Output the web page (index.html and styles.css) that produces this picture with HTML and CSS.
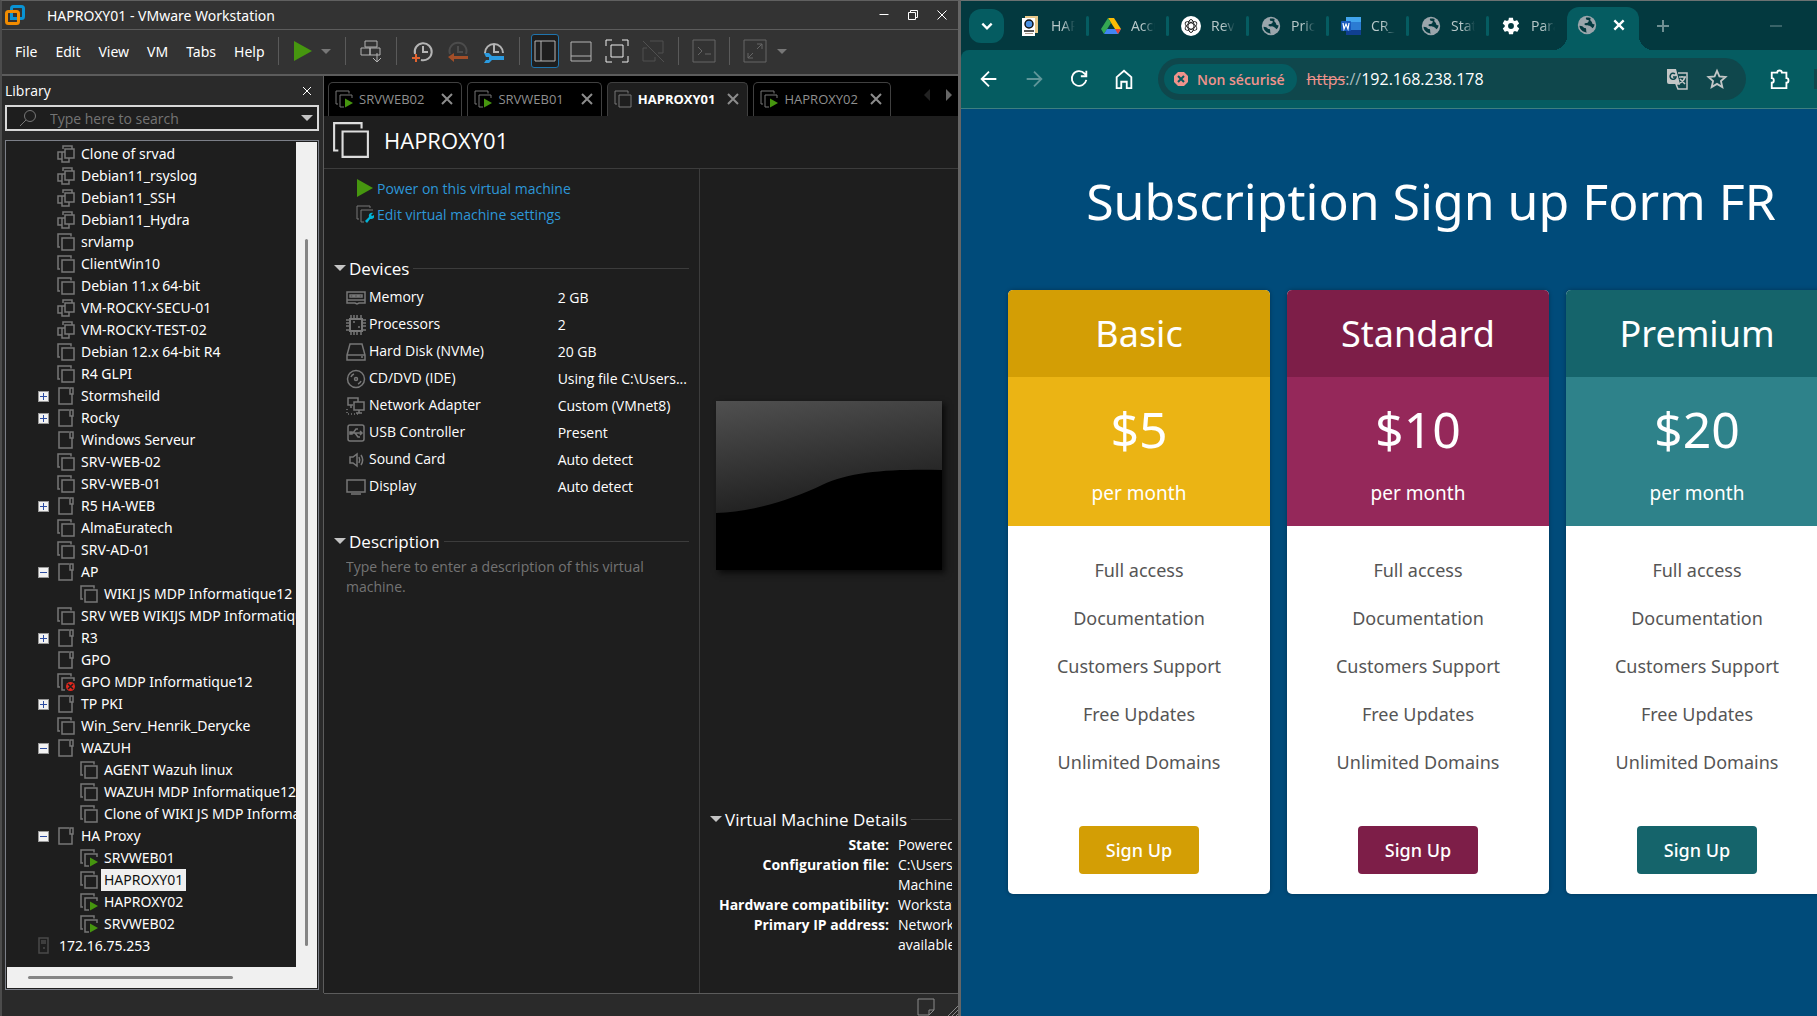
FILE: index.html
```html
<!DOCTYPE html>
<html lang="en">
<head>
    <meta charset="UTF-8">
    <meta name="viewport" content="width=device-width, initial-scale=1.0">
    <title>HAPROXY01 - VMware Workstation</title>
    <link rel="stylesheet" href="styles.css">
</head>
<body>
    <!-- Shared icons -->
    <svg class="sprite" aria-hidden="true">
        <symbol id="vm" viewBox="0 0 18 18"><path d="M3 14H1V1h13v2.500M5 5h12v12H5z"/></symbol>
        <symbol id="vm-on" viewBox="0 0 18 18"><path d="M3 14H1V1h13v2.500M9 17H5V5h12v3"/><path class="green" d="M10 8.500l8 4.500-8 4.500z"/></symbol>
        <symbol id="vm-error" viewBox="0 0 18 18"><path d="M3 14H1V1h13v2.500M8 17H5V5h12v3"/><circle class="red" cx="13.500" cy="13.500" r="4.500"/><path class="cross" d="M11 11l5 5M16 11l-5 5"/></symbol>
        <symbol id="clone" viewBox="0 0 18 18"><path d="M6 4V1h9v3M8 4h9v9H8zM8 7H5v10h7v-4M5 7H1v7h4"/></symbol>
        <symbol id="folder" viewBox="0 0 18 18"><path d="M12 1H2v16h13V7M13 1h3v6h-3z"/></symbol>
        <symbol id="server" viewBox="0 0 18 18"><path class="dim" d="M1 1h9v15H1zM3 4h5M3 6h5M5 11h2"/></symbol>
        <symbol id="globe" viewBox="0 0 24 24"><circle cx="12" cy="12" r="11" fill="#9aa5ab"/><path d="M3 13c3 0 4 1 5 2s3 0 3 2 0 3 1 4c-5 0-9-4-9-8zM11 3c-1 2 0 3 2 3s1 2 0 3-4 0-4 2 5 1 6 2 3 1 3 3c2-1 3-3 3-5-1 0-3 0-3-2s-2-1-2-3 0-2 1-2c-2-1-4-1-6-1z" fill="#03393f"/></symbol>
    </svg>

    <div class="desktop">
        <div class="vmware">
            <div class="titlebar">
                <svg class="logo" viewBox="0 0 20 20"><rect x="6.500" y="1.500" width="12" height="12" rx="2" fill="none" stroke="#0a93d3" stroke-width="3"/><rect x="1.500" y="6.500" width="12" height="12" rx="2" fill="none" stroke="#f28c00" stroke-width="3"/><path d="M6.500 8v5.500H12" fill="none" stroke="#0a93d3" stroke-width="3"/></svg>
                <span class="title">HAPROXY01 - VMware Workstation</span>
                <div class="win-buttons">
                    <button aria-label="Minimize"><svg viewBox="0 0 12 12"><path d="M1.500 5.500h9"/></svg></button>
                    <button aria-label="Restore"><svg viewBox="0 0 12 12"><path d="M1.500 3.500h7v7h-7zM3.500 3v-1.500h7v7H9"/></svg></button>
                    <button aria-label="Close"><svg viewBox="0 0 12 12"><path d="M1.500 1.500l9 9M10.500 1.500l-9 9"/></svg></button>
                </div>
            </div>

            <div class="toolbar">
                <div class="menu">
                    <button>File</button>
                    <button>Edit</button>
                    <button>View</button>
                    <button>VM</button>
                    <button>Tabs</button>
                    <button>Help</button>
                </div>
                <span class="sep"></span>
                <button class="tool play" aria-label="Power on"><svg viewBox="0 0 20 22"><path d="M1 1l18 10L1 21z" fill="#46960f"/></svg></button>
                <button class="tool caret" aria-label="Power options"></button>
                <span class="sep"></span>
                <button class="tool" aria-label="Send Ctrl+Alt+Del"><svg viewBox="0 0 24 24"><path d="M6 2h12v6H6zM2 9h9v7H2zM11 9h10v7H11zM18 14v9M14 19l4 4 4-4"/></svg></button>
                <span class="sep"></span>
                <button class="tool" aria-label="Take snapshot"><svg viewBox="0 0 24 24"><path d="M5 15a8.500 8.500 0 1 1 6 6M13 7v6h5" stroke-width="2"/><path d="M6 15v8M2 19h8" stroke="#e0622f" stroke-width="2"/></svg></button>
                <button class="tool" aria-label="Revert snapshot"><svg viewBox="0 0 24 24"><path d="M4 15a8.500 8.500 0 1 1 16 0M12 7v6h5" stroke="#4c4c4c" stroke-width="2"/><path d="M2 18l6-4v3h14v3H8v3z" fill="#a34e28" stroke="none"/></svg></button>
                <button class="tool" aria-label="Manage snapshots"><svg viewBox="0 0 24 24"><path d="M3 14a9 9 0 1 1 18 0M12 6v7h5" stroke-width="2"/><path d="M2 14h5l3 3h12v4H10l-3 3H2l2-3h3v-3H4z" fill="#2b9be0" stroke="none"/></svg></button>
                <span class="sep"></span>
                <button class="tool pressed" aria-label="Show library"><svg viewBox="0 0 24 24"><path d="M2 2h20v20H2zM8 2v20"/></svg></button>
                <button class="tool" aria-label="Show thumbnails"><svg viewBox="0 0 24 24"><path d="M2 3h20v19H2zM2 17h20"/></svg></button>
                <button class="tool bright" aria-label="Full screen"><svg viewBox="0 0 24 24"><path d="M1 7V1h6M17 1h6v6M23 17v6h-6M7 23H1v-6M6 6h12v12H6z"/></svg></button>
                <button class="tool off" aria-label="Unity mode"><svg viewBox="0 0 24 24"><path d="M9 2h13v12h-5M14 18v4H2V9h4M2 2l21 21"/></svg></button>
                <span class="sep"></span>
                <button class="tool dimmed" aria-label="Console view"><svg viewBox="0 0 24 24"><path d="M1 1h22v22H1zM6 8l4 4-4 4M13 15h6"/></svg></button>
                <span class="sep"></span>
                <button class="tool dimmed" aria-label="Stretch guest"><svg viewBox="0 0 24 24"><path d="M1 1h22v22H1zM14 5h5v5M10 19H5v-5M19 5l-5 5M5 19l5-5"/></svg></button>
                <button class="tool caret" aria-label="Stretch options"></button>
            </div>

            <div class="workspace">
                <div class="library">
                    <div class="library-head">
                        <span>Library</span>
                        <button class="x" aria-label="Close library"><svg viewBox="0 0 12 12"><path d="M2 2l8 8M10 2l-8 8"/></svg></button>
                    </div>
                    <div class="search">
                        <svg viewBox="0 0 18 18"><circle cx="11" cy="7" r="5.500"/><path d="M7 11l-6 6"/></svg>
                        <input type="text" aria-label="Search library" placeholder="Type here to search">
                        <button aria-label="Search options"></button>
                    </div>
                    <div class="tree-box">
                        <ul class="tree">
                            <li><svg><use href="#clone"/></svg><span>Clone of srvad</span></li>
                            <li><svg><use href="#clone"/></svg><span>Debian11_rsyslog</span></li>
                            <li><svg><use href="#clone"/></svg><span>Debian11_SSH</span></li>
                            <li><svg><use href="#clone"/></svg><span>Debian11_Hydra</span></li>
                            <li><svg><use href="#vm"/></svg><span>srvlamp</span></li>
                            <li><svg><use href="#vm"/></svg><span>ClientWin10</span></li>
                            <li><svg><use href="#vm"/></svg><span>Debian 11.x 64-bit</span></li>
                            <li><svg><use href="#clone"/></svg><span>VM-ROCKY-SECU-01</span></li>
                            <li><svg><use href="#clone"/></svg><span>VM-ROCKY-TEST-02</span></li>
                            <li><svg><use href="#vm"/></svg><span>Debian 12.x 64-bit R4</span></li>
                            <li><svg><use href="#vm"/></svg><span>R4 GLPI</span></li>
                            <li class="group"><button class="plus" aria-label="Expand Stormsheild"></button><svg><use href="#folder"/></svg><span>Stormsheild</span></li>
                            <li class="group"><button class="plus" aria-label="Expand Rocky"></button><svg><use href="#folder"/></svg><span>Rocky</span></li>
                            <li><svg><use href="#folder"/></svg><span>Windows Serveur</span></li>
                            <li><svg><use href="#vm"/></svg><span>SRV-WEB-02</span></li>
                            <li><svg><use href="#vm"/></svg><span>SRV-WEB-01</span></li>
                            <li class="group"><button class="plus" aria-label="Expand R5 HA-WEB"></button><svg><use href="#folder"/></svg><span>R5 HA-WEB</span></li>
                            <li><svg><use href="#vm"/></svg><span>AlmaEuratech</span></li>
                            <li><svg><use href="#vm"/></svg><span>SRV-AD-01</span></li>
                            <li class="group"><button aria-label="Collapse AP"></button><svg><use href="#folder"/></svg><span>AP</span></li>
                            <li class="child"><svg><use href="#vm"/></svg><span>WIKI JS MDP Informatique12</span></li>
                            <li><svg><use href="#vm"/></svg><span>SRV WEB WIKIJS MDP Informatique12</span></li>
                            <li class="group"><button class="plus" aria-label="Expand R3"></button><svg><use href="#folder"/></svg><span>R3</span></li>
                            <li><svg><use href="#folder"/></svg><span>GPO</span></li>
                            <li><svg><use href="#vm-error"/></svg><span>GPO MDP Informatique12</span></li>
                            <li class="group"><button class="plus" aria-label="Expand TP PKI"></button><svg><use href="#folder"/></svg><span>TP PKI</span></li>
                            <li><svg><use href="#vm"/></svg><span>Win_Serv_Henrik_Derycke</span></li>
                            <li class="group"><button aria-label="Collapse WAZUH"></button><svg><use href="#folder"/></svg><span>WAZUH</span></li>
                            <li class="child"><svg><use href="#vm"/></svg><span>AGENT Wazuh linux</span></li>
                            <li class="child"><svg><use href="#vm"/></svg><span>WAZUH MDP Informatique12</span></li>
                            <li class="child"><svg><use href="#vm"/></svg><span>Clone of WIKI JS MDP Informatique12</span></li>
                            <li class="group"><button aria-label="Collapse HA Proxy"></button><svg><use href="#folder"/></svg><span>HA Proxy</span></li>
                            <li class="child"><svg><use href="#vm-on"/></svg><span>SRVWEB01</span></li>
                            <li class="child"><svg><use href="#vm"/></svg><span class="selected">HAPROXY01</span></li>
                            <li class="child"><svg><use href="#vm-on"/></svg><span>HAPROXY02</span></li>
                            <li class="child"><svg><use href="#vm-on"/></svg><span>SRVWEB02</span></li>
                            <li class="host"><svg><use href="#server"/></svg><span>172.16.75.253</span></li>
                        </ul>
                        <div class="vscroll"><div class="thumb"></div></div>
                        <div class="hscroll"><div class="thumb"></div></div>
                    </div>
                </div>

                <div class="main">
                    <div class="tabs">
                        <div class="tab"><svg><use href="#vm-on"/></svg><span>SRVWEB02</span><button class="x" aria-label="Close SRVWEB02"><svg viewBox="0 0 12 12"><path d="M1 1l10 10M11 1L1 11"/></svg></button></div>
                        <div class="tab"><svg><use href="#vm-on"/></svg><span>SRVWEB01</span><button class="x" aria-label="Close SRVWEB01"><svg viewBox="0 0 12 12"><path d="M1 1l10 10M11 1L1 11"/></svg></button></div>
                        <div class="tab active"><svg><use href="#vm"/></svg><span>HAPROXY01</span><button class="x" aria-label="Close HAPROXY01"><svg viewBox="0 0 12 12"><path d="M1 1l10 10M11 1L1 11"/></svg></button></div>
                        <div class="tab"><svg><use href="#vm-on"/></svg><span>HAPROXY02</span><button class="x" aria-label="Close HAPROXY02"><svg viewBox="0 0 12 12"><path d="M1 1l10 10M11 1L1 11"/></svg></button></div>
                        <div class="tab-arrows">
                            <button class="left" aria-label="Scroll tabs left"></button>
                            <button class="right" aria-label="Scroll tabs right"></button>
                        </div>
                    </div>

                    <div class="vm-head">
                        <svg><use href="#vm"/></svg>
                        <h1>HAPROXY01</h1>
                    </div>

                    <div class="vm-body">
                        <div class="summary">
                            <a class="command" href="#power"><svg viewBox="0 0 18 18"><path class="green" d="M1 0l16 9L1 18z"/></svg>Power on this virtual machine</a>
                            <a class="command" href="#settings"><svg viewBox="0 0 18 18"><path d="M3 14H1V1h13v2M8 17H5V5h12"/><path d="M9 16l4-4c-1-3 2-5 4-4l-2 2 1 1 2-1c1 3-1 4-4 4l-3 4z" fill="#00b4d8" stroke="none"/></svg>Edit virtual machine settings</a>

                            <h2 class="section"><i></i>Devices</h2>
                            <table class="devices">
                                <tr><th><svg viewBox="0 0 20 18"><path d="M1 3h18v11h-6l-2 1-2-1H1zM1 11h18M4 6h3v2H4zM8.500 6h3v2h-3zM13 6h3v2h-3z"/></svg>Memory</th><td>2 GB</td></tr>
                                <tr><th><svg viewBox="0 0 20 20"><path d="M4 4h12v12H4z" stroke-width="2"/><path d="M5 0v3M8 0v3M11 0v3M15 0v3M5 17v3M8 17v3M11 17v3M15 17v3M0 5h3M0 8h3M0 11h3M0 15h3M17 5h3M17 8h3M17 11h3M17 15h3M7 7h2M12 12h2"/></svg>Processors</th><td>2</td></tr>
                                <tr><th><svg viewBox="0 0 20 18"><path d="M4 1h12l3 11v5H1v-5zM1 12h18M15 14h2"/></svg>Hard Disk (NVMe)</th><td>20 GB</td></tr>
                                <tr><th><svg viewBox="0 0 20 20"><circle cx="10" cy="10" r="8.500"/><circle cx="10" cy="10" r="1.500"/><path d="M5 8a5 5 0 0 1 3-3M15 12a5 5 0 0 1-3 3"/></svg>CD/DVD (IDE)</th><td>Using file C:\Users...</td></tr>
                                <tr><th><svg viewBox="0 0 20 20"><path d="M7 9H2V2h10v4M8 6h10v8H8zM13 14v3M10 17h6M5 9v3"/><path d="M1 13v5h12" stroke-dasharray="1 2"/></svg>Network Adapter</th><td>Custom (VMnet8)</td></tr>
                                <tr><th><svg viewBox="0 0 20 20"><rect x="2" y="2" width="16" height="16" rx="2"/><path d="M4 10h11M7 10l3-4h2M9 10l3 4h2M14 8l2 2-2 2M4 9h2v2H4z"/></svg>USB Controller</th><td>Present</td></tr>
                                <tr><th><svg viewBox="0 0 20 20"><path d="M4 7h3l4-3v12l-4-3H4zM13 7c1 2 1 4 0 6M15 5c2 3 2 7 0 10"/></svg>Sound Card</th><td>Auto detect</td></tr>
                                <tr><th><svg viewBox="0 0 20 18"><path d="M1 2h18v12H1zM5 16h10"/></svg>Display</th><td>Auto detect</td></tr>
                            </table>

                            <h2 class="section"><i></i><label for="description">Description</label></h2>
                            <textarea id="description" rows="2" placeholder="Type here to enter a description of this virtual machine."></textarea>
                        </div>

                        <div class="preview">
                            <svg class="screen" viewBox="0 0 226 169">
                                <defs>
                                    <linearGradient id="shine" x1="0" y1="0" x2="0.300" y2="1">
                                        <stop offset="0" stop-color="#505050"/>
                                        <stop offset="1" stop-color="#1f1f1f"/>
                                    </linearGradient>
                                </defs>
                                <path d="M0 0h226v169H0z" fill="#000"/>
                                <path d="M0 0h226v69c-50-1-90 1-120 15C75 99 35 111 0 112z" fill="url(#shine)"/>
                            </svg>
                            <div class="details">
                                <h2 class="section"><i></i>Virtual Machine Details</h2>
                                <table>
                                    <tr><th>State:</th><td>Powered off</td></tr>
                                    <tr><th>Configuration file:</th><td>C:\Users\<br>Machines</td></tr>
                                    <tr><th>Hardware compatibility:</th><td>Workstation</td></tr>
                                    <tr><th>Primary IP address:</th><td>Network<br>available</td></tr>
                                </table>
                            </div>
                        </div>
                    </div>
                </div>
            </div>

            <div class="statusbar">
                <svg viewBox="0 0 20 20"><path d="M2 2h16v11l-5 5H2zM13 18v-5h5"/></svg>
                <svg class="grip" viewBox="0 0 10 18"><path d="M0 18L10 8M4 18l6-6M8 18l2-2"/></svg>
            </div>
        </div>

        <div class="browser">
            <div class="strip">
                <button class="tab-search" aria-label="Search tabs"><svg viewBox="0 0 12 12"><path d="M2 4l4 4 4-4"/></svg></button>
                <div class="btab"><svg viewBox="0 0 20 20"><path d="M4 0h13v17H4z" fill="#e8c98b"/><path d="M1 2h13v18H1z" fill="#fff"/><circle cx="8" cy="8" r="4" fill="#4a90e2" stroke="#111" stroke-width="1.500"/><path d="M3 14h10v2H3z" fill="#555"/><path d="M4 17h8v1H4z" fill="#a98"/></svg><span>HAPROXY</span></div>
                <div class="btab"><svg viewBox="0 0 20 20"><path d="M7 2h6l7 11h-6z" fill="#fbbc04"/><path d="M7 2L0 13l3 5 7-11z" fill="#34a853"/><path d="M6 13h14l-3 5H3z" fill="#4285f4"/><path d="M14 13h6l-3 5z" fill="#ea4335"/></svg><span>Accueil</span></div>
                <div class="btab"><svg viewBox="0 0 20 20"><circle cx="10" cy="10" r="10" fill="#fff"/><g fill="none" stroke="#222" stroke-width="1"><ellipse cx="10" cy="10" rx="3" ry="6.500"/><ellipse cx="10" cy="10" rx="3" ry="6.500" transform="rotate(60 10 10)"/><ellipse cx="10" cy="10" rx="3" ry="6.500" transform="rotate(120 10 10)"/></g></svg><span>Reverse</span></div>
                <div class="btab"><svg><use href="#globe"/></svg><span>Pricing</span></div>
                <div class="btab"><svg viewBox="0 0 20 20"><rect x="5" y="1" width="15" height="18" rx="1" fill="#2b7cd3"/><path d="M5 1h15v5H5z" fill="#41a5ee"/><path d="M5 14h15v5H5z" fill="#103f91"/><rect y="5" width="10" height="10" rx="1" fill="#185abd"/><path d="M2 7l1 6 2-5 2 5 1-6" fill="none" stroke="#fff" stroke-width="1.200"/></svg><span>CR_HA</span></div>
                <div class="btab"><svg><use href="#globe"/></svg><span>Statistics</span></div>
                <div class="btab"><svg viewBox="0 0 24 24"><path d="M19.400 13c0-.300.100-.600.100-1s0-.700-.100-1l2.100-1.600c.200-.200.200-.400.100-.600l-2-3.500c-.100-.200-.400-.300-.600-.200l-2.500 1c-.500-.400-1.100-.700-1.700-1l-.400-2.600c0-.300-.200-.500-.500-.500h-4c-.300 0-.500.200-.500.400L9 5c-.600.200-1.200.600-1.700 1l-2.500-1c-.200-.100-.500 0-.600.200l-2 3.500c-.100.200 0 .500.100.600L4.500 11c0 .300-.100.700-.100 1s0 .700.100 1l-2.100 1.600c-.200.200-.200.400-.100.600l2 3.500c.100.200.4.300.6.200l2.500-1c.500.400 1.100.700 1.700 1l.4 2.600c0 .3.200.5.500.5h4c.3 0 .5-.2.500-.4l.4-2.600c.6-.3 1.200-.6 1.700-1l2.500 1c.2.100.5 0 .6-.2l2-3.500c.1-.2.100-.5-.1-.6zM12 15.500a3.500 3.500 0 1 1 0-7 3.500 3.500 0 0 1 0 7z" fill="#fff"/></svg><span>Paramètres</span></div>
                <div class="btab current"><svg><use href="#globe"/></svg><button aria-label="Close tab"><svg viewBox="0 0 12 12"><path d="M2 2l8 8M10 2l-8 8"/></svg></button></div>
                <button class="new-tab" aria-label="New tab"><svg viewBox="0 0 14 14"><path d="M7 1v12M1 7h12"/></svg></button>
                <button class="minimize" aria-label="Minimize"><svg viewBox="0 0 14 14"><path d="M1 7h12"/></svg></button>
            </div>

            <div class="navbar">
                <button aria-label="Back"><svg viewBox="0 0 24 24"><path d="M20 12H5M12 4l-8 8 8 8"/></svg></button>
                <button class="faded" aria-label="Forward"><svg viewBox="0 0 24 24"><path d="M4 12h15M12 4l8 8-8 8"/></svg></button>
                <button aria-label="Reload"><svg viewBox="0 0 24 24"><path d="M20 13a8 8 0 1 1-2-7l2 2M20 3v6h-6"/></svg></button>
                <button aria-label="Home"><svg viewBox="0 0 24 24"><path d="M4 10l8-7 8 7v12h-5v-7H9v7H4z"/></svg></button>
                <div class="omnibox">
                    <button class="unsafe"><svg viewBox="0 0 16 16"><path d="M5 1h6l4 4v6l-4 4H5l-4-4V5z" fill="#f0938c"/><path d="M5 5l6 6M11 5l-6 6" stroke="#055c61" stroke-width="2"/></svg>Non sécurisé</button>
                    <div class="url" role="textbox" aria-label="Address" contenteditable="true" spellcheck="false"><s>https</s><span>://</span>192.168.238.178</div>
                    <button aria-label="Translate"><svg viewBox="0 0 22 22"><path d="M1 1h9l4 15H3q-2 0-2-2z" fill="#c3c6c6"/><path d="M12 5h9v16H12l-2-5h4M13 9h7M16 8v1M19 9c-1 4-3 5-5 6M14 11l5 5" fill="none" stroke="#c3c6c6" stroke-width="1.500"/><path d="M9 6a3 3 0 1 0 1 3H7" fill="none" stroke="#0f474c" stroke-width="1.500"/></svg></button>
                    <button aria-label="Bookmark"><svg viewBox="0 0 24 24"><path d="M12 3l2.600 6.200 6.700.6-5 4.400 1.500 6.600L12 17.300l-5.800 3.500 1.500-6.600-5-4.400 6.700-.6z" fill="none" stroke="#c3c6c6" stroke-width="2"/></svg></button>
                </div>
                <button aria-label="Extensions"><svg viewBox="0 0 24 24"><path d="M3 5h6c0-3 5-3 5 0h5v6c3 0 3 5 0 5v6H3v-6c3 0 3-5 0-5z"/></svg></button>
                <span class="nav-sep"></span>
            </div>

            <div class="page">
                <div class="page-inner">
                    <h1>Subscription Sign up Form FR</h1>
                    <div class="plans">
                        <div class="plan basic">
                            <h2>Basic</h2>
                            <div class="price"><strong>$5</strong><span>per month</span></div>
                            <ul>
                                <li>Full access</li>
                                <li>Documentation</li>
                                <li>Customers Support</li>
                                <li>Free Updates</li>
                                <li>Unlimited Domains</li>
                            </ul>
                            <button>Sign Up</button>
                        </div>
                        <div class="plan standard">
                            <h2>Standard</h2>
                            <div class="price"><strong>$10</strong><span>per month</span></div>
                            <ul>
                                <li>Full access</li>
                                <li>Documentation</li>
                                <li>Customers Support</li>
                                <li>Free Updates</li>
                                <li>Unlimited Domains</li>
                            </ul>
                            <button>Sign Up</button>
                        </div>
                        <div class="plan premium">
                            <h2>Premium</h2>
                            <div class="price"><strong>$20</strong><span>per month</span></div>
                            <ul>
                                <li>Full access</li>
                                <li>Documentation</li>
                                <li>Customers Support</li>
                                <li>Free Updates</li>
                                <li>Unlimited Domains</li>
                            </ul>
                            <button>Sign Up</button>
                        </div>
                    </div>
                </div>
            </div>
        </div>
    </div>
</body>
</html>
```
FILE: styles.css
```css
* {
    box-sizing: border-box;
}

body {
    margin: 0;
    font-family: "Open Sans", "Noto Sans", sans-serif;
    font-size: 14px;
    background-color: #101010;
    color: #fff;
    overflow: hidden;
}

button {
    font: inherit;
    color: inherit;
    background: none;
    border: none;
    padding: 0;
    display: flex;
    align-items: center;
    justify-content: center;
}

h1,
h2,
ul {
    margin: 0;
    padding: 0;
    font-weight: normal;
    list-style: none;
}

svg {
    width: 18px;
    height: 18px;
    flex: none;
    fill: none;
    stroke: #777;
}

.sprite {
    position: absolute;
    width: 0;
    height: 0;
}

.green {
    fill: #46960f;
    stroke: none;
}

.red {
    fill: #e0281e;
    stroke: none;
}

.cross {
    stroke: #1e1e1e;
}

.dim {
    stroke: #4a4a4a;
}

.desktop {
    display: grid;
    grid-template-columns: 961fr 856fr;
    height: 100vh;
}

/* VMware window */
.vmware {
    display: flex;
    flex-direction: column;
    min-width: 0;
    min-height: 0;
    background-color: #2a2a2a;
    border-top: 1px solid #606060;
    border-left: 2px solid #4c4c4c;
    border-right: 3px solid #656565;
}

.titlebar {
    display: flex;
    align-items: center;
    height: 29px;
    padding: 0 10px 0 3px;
    background-color: #333;
    border-bottom: 1px solid #5c5c5c;
}

.titlebar,
.menu,
.tree {
    font-family: "Noto Sans", "Open Sans", sans-serif;
}

.logo {
    width: 20px;
    height: 20px;
}

.title {
    flex: 1;
    padding-left: 22px;
}

.win-buttons {
    display: flex;
    gap: 17px;
}

.win-buttons svg {
    width: 12px;
    height: 12px;
    stroke: #fff;
}

.toolbar {
    display: flex;
    align-items: center;
    height: 46px;
    padding: 0 0 2px 13px;
    background-color: #333;
    border-bottom: 2px solid #5c5c5c;
}

.menu {
    display: flex;
    gap: 18px;
    padding-right: 13px;
}

.sep {
    width: 1px;
    height: 28px;
    margin: 0 7px;
    background-color: #5a5a5a;
}

.menu + .sep {
    margin-left: 0;
}

.tool {
    width: 28px;
    height: 34px;
    margin: 0 4px;
}

.tool svg {
    width: 24px;
    height: 24px;
    stroke: #b4b4b4;
}

.play {
    width: 20px;
    margin-left: 7px;
}

.play svg {
    width: 20px;
    height: 22px;
    stroke: none;
}

.caret {
    width: 10px;
    margin-right: 7px;
}

.caret::before,
.search button::before,
.section i {
    content: "";
    border: 6px solid transparent;
    border-top-color: #c4c4c4;
    border-bottom: none;
}

.caret::before {
    border-width: 5px;
    border-bottom: none;
    border-top-color: #777;
}

.pressed {
    background-color: #1e1e1e;
    border: 1px solid #1f74ad;
    border-radius: 3px;
}

.bright svg {
    stroke: #eee;
}

.off svg {
    stroke: #505050;
}

.dimmed svg {
    stroke: #666;
}

.workspace {
    flex: 1;
    display: flex;
    min-height: 0;
}

.library {
    width: 322px;
    display: flex;
    flex-direction: column;
    padding: 0 4px 3px 3px;
    border-right: 1px solid #5c5c5c;
    margin-bottom: 1px;
}

.library-head {
    display: flex;
    justify-content: space-between;
    align-items: center;
    height: 29px;
    padding-right: 6px;
}

.x svg {
    width: 12px;
    height: 12px;
    stroke: #fff;
    stroke-width: 1;
}

.search {
    display: flex;
    align-items: center;
    height: 26px;
    padding: 0 4px 0 12px;
    border: 2px solid #d8d8d8;
    background-color: #1e1e1e;
}

.search input {
    flex: 1;
    min-width: 0;
    margin-left: 13px;
    padding: 0;
    font: inherit;
    color: #fff;
    background: none;
    border: none;
}

.search input::placeholder,
textarea::placeholder {
    color: #747474;
    opacity: 1;
}

.tree-box {
    flex: 1;
    display: grid;
    grid-template-columns: minmax(0, 1fr) 21px;
    grid-template-rows: minmax(0, 1fr) 21px;
    min-height: 0;
    margin-top: 9px;
    padding: 1px;
    border: 1px solid #7c7f88;
    background-color: #1e1e1e;
}

.tree {
    padding-top: 1px;
    overflow: hidden;
}

.tree li {
    display: flex;
    align-items: center;
    height: 22px;
    padding-left: 50px;
    white-space: nowrap;
}

.tree .group {
    padding-left: 31px;
}

.tree .child {
    padding-left: 73px;
}

.tree .host {
    padding-left: 31px;
}

.tree .host svg {
    margin-right: 0;
}

.tree svg {
    stroke-width: 1.5;
    margin-right: 3px;
}

.tree span {
    line-height: 22px;
    padding: 0 3px;
}

.tree .selected {
    background-color: #f0f0f0;
    color: #111;
}

.tree button {
    width: 11px;
    height: 11px;
    margin-right: 8px;
    background: linear-gradient(#2b4ba0, #2b4ba0) center / 7px 1px no-repeat #f2f2f2;
    border: 1px solid #999;
}

.tree .plus {
    background: linear-gradient(#2b4ba0, #2b4ba0) center / 7px 1px no-repeat, linear-gradient(#2b4ba0, #2b4ba0) center / 1px 7px no-repeat #f2f2f2;
}

.vscroll,
.hscroll {
    background-color: #f0f0f0;
}

.vscroll {
    padding: 97px 9px 21px;
}

.hscroll {
    grid-column: 1 / 3;
    padding: 9px 84px 9px 21px;
}

.thumb {
    height: 100%;
    border-radius: 2px;
    background-color: #858585;
}

.main {
    flex: 1;
    display: flex;
    flex-direction: column;
    min-width: 0;
    background-color: #1e1e1e;
    border-bottom: 1px solid #5c5c5c;
}

.tabs {
    display: flex;
    gap: 5px;
    height: 40px;
    padding: 6px 6px 0 4px;
    background-color: #000;
}

.tab {
    display: flex;
    align-items: center;
    padding: 0 8px 2px 6px;
    font-size: 13px;
    color: #8f8f8f;
    border: 1px solid #404040;
    border-bottom: none;
    border-radius: 5px 5px 0 0;
}

.tab span {
    padding: 0 17px 0 6px;
}

.tab .x svg {
    stroke: #8c8c8c;
    stroke-width: 2;
}

.tab.active {
    background-color: #1e1e1e;
    color: #fff;
    font-weight: bold;
}

.tab.active span,
.tab.active ~ .tab span {
    padding-right: 12px;
}

.tab-arrows {
    display: flex;
    gap: 16px;
    margin: 8px 0 0 auto;
    height: 10px;
}

.tab-arrows button::before {
    content: "";
    border: 6px solid transparent;
}

.tab-arrows .left::before {
    border-left: none;
    border-right-color: #222;
}

.tab-arrows .right::before {
    border-right: none;
    border-left-color: #666;
}

.vm-head {
    display: flex;
    align-items: center;
    height: 53px;
    padding: 0 8px 4px;
    border-bottom: 1px solid #3c3c3c;
}

.vm-head svg {
    width: 38px;
    height: 38px;
    stroke: #ddd;
}

.vm-head h1 {
    padding-left: 14px;
    font-size: 22px;
}

.vm-body {
    flex: 1;
    display: grid;
    grid-template-columns: 376fr 258fr;
    min-height: 0;
}

.summary {
    padding: 6px 10px 0;
    border-right: 1px solid #3c3c3c;
}

.command {
    display: flex;
    align-items: center;
    gap: 3px;
    height: 26px;
    padding-left: 22px;
    color: #2d97d8;
    text-decoration: none;
}

.section {
    display: flex;
    align-items: center;
    height: 24px;
    font-size: 17px;
}

.summary .section {
    margin-top: 29px;
}

.section i {
    margin-right: 3px;
}

.section::after {
    content: "";
    flex: 1;
    height: 1px;
    margin-left: 4px;
    background-color: #3c3c3c;
}

.devices {
    width: 100%;
    margin-top: 4px;
    border-collapse: collapse;
    table-layout: fixed;
}

.devices th,
.devices td {
    height: 27px;
    padding: 0;
    font-weight: normal;
    text-align: left;
    white-space: nowrap;
}

.devices th {
    width: 63%;
    padding-left: 12px;
}

.devices svg {
    width: 20px;
    height: 20px;
    margin-right: 3px;
    vertical-align: middle;
    stroke-width: 1.5;
}

textarea {
    display: block;
    width: calc(100% - 12px);
    margin: 4px 0 0 12px;
    padding: 0;
    font: inherit;
    line-height: 20px;
    color: #fff;
    background: none;
    border: none;
    resize: none;
    overflow: hidden;
}

.preview {
    display: flex;
    flex-direction: column;
    min-width: 0;
    padding: 0 6px 38px 10px;
}

.screen {
    width: auto;
    height: auto;
    margin: auto 10px auto 6px;
    box-shadow: 3px 3px 6px #0a0a0a;
    stroke: none;
}

.details {
    padding-top: 5px;
}

.details table {
    width: 100%;
    margin-top: 4px;
    border-collapse: collapse;
    table-layout: fixed;
    line-height: 20px;
}

.details th,
.details td {
    padding: 0;
    text-align: right;
    vertical-align: top;
    white-space: nowrap;
}

.details th {
    width: 179px;
}

.details td {
    padding-left: 9px;
    text-align: left;
    overflow: hidden;
}

.statusbar {
    display: flex;
    justify-content: flex-end;
    gap: 12px;
    height: 22px;
    padding-top: 3px;
}

.statusbar svg {
    width: 20px;
    height: 20px;
    stroke: #8a8a8a;
}

.statusbar .grip {
    width: 10px;
}

/* Browser window */
.browser {
    display: flex;
    flex-direction: column;
    min-width: 0;
    overflow: hidden;
    background-color: #03393f;
    border-top: 1px solid #6b7272;
}

.strip {
    display: flex;
    align-items: center;
    height: 49px;
    padding-left: 8px;
    color: #b9c9ca;
}

.tab-search {
    width: 35px;
    height: 34px;
    margin-right: 17px;
    border-radius: 12px;
    background-color: #055c61;
}

.tab-search svg {
    width: 14px;
    height: 14px;
    stroke: #fff;
    stroke-width: 2;
}

.btab {
    display: flex;
    align-items: center;
    width: 80px;
    flex: none;
}

.btab > svg {
    width: 20px;
    height: 20px;
    stroke: none;
}

.btab span {
    width: 24px;
    margin: 0 11px 0 10px;
    overflow: hidden;
    white-space: nowrap;
    -webkit-mask-image: linear-gradient(to right, #000 50%, transparent);
    mask-image: linear-gradient(to right, #000 50%, transparent);
}

.btab::after {
    content: "";
    width: 3px;
    height: 20px;
    border-radius: 2px;
    background-color: #055c61;
}

.btab:nth-last-of-type(2) {
    width: 66px;
}

.btab:nth-last-of-type(2)::after {
    display: none;
}

.btab.current {
    position: relative;
    width: 72px;
    height: 43px;
    margin-top: 6px;
    padding: 0 13px 7px 10px;
    justify-content: space-between;
    border-radius: 12px 12px 0 0;
    background-color: #055c61;
}

/* curved feet of the active tab */
.btab.current::before,
.btab.current::after {
    content: "";
    position: absolute;
    bottom: 0;
    width: 14px;
    height: 14px;
    border-radius: 0;
}

.btab.current::before {
    right: 100%;
    background: radial-gradient(circle at 0 0, transparent 14px, #055c61 14px);
}

.btab.current::after {
    left: 100%;
    background: radial-gradient(circle at 100% 0, transparent 14px, #055c61 14px);
}

.btab.current button svg {
    width: 14px;
    height: 14px;
    stroke: #fff;
    stroke-width: 2;
}

.new-tab {
    margin-left: 17px;
}

.new-tab svg,
.minimize svg {
    width: 14px;
    height: 14px;
    stroke: #6f8f92;
    stroke-width: 2;
}

.minimize {
    margin: 0 34px 0 auto;
}

.minimize svg {
    stroke-width: 1;
}

.navbar {
    display: flex;
    align-items: center;
    gap: 23px;
    height: 59px;
    padding-left: 17px;
    background-color: #055c61;
    border-bottom: 1px solid #3f7f80;
    border-radius: 8px 0 0 0;
}

.navbar button svg {
    width: 22px;
    height: 22px;
    stroke: #fff;
    stroke-width: 2;
}

.navbar .faded svg {
    stroke: #5f9699;
}

.omnibox {
    flex: 1;
    display: flex;
    align-items: center;
    gap: 18px;
    height: 42px;
    padding: 0 18px 0 6px;
    border-radius: 21px;
    background-color: #0f474c;
}

.omnibox button svg {
    width: 22px;
    height: 22px;
    stroke: none;
}

.omnibox .unsafe {
    gap: 8px;
    height: 30px;
    padding: 0 12px 0 9px;
    border-radius: 15px;
    background-color: #055c61;
    color: #f0938c;
    font-weight: 600;
}

.omnibox .unsafe svg {
    width: 16px;
    height: 16px;
}

.url {
    flex: 1;
    margin-left: -8px;
    font-size: 16px;
    white-space: nowrap;
}

.url s {
    color: #f0938c;
}

.url span {
    color: #a9bcbd;
}

.nav-sep {
    width: 3px;
    height: 20px;
    background-color: #0f474c;
}

.page {
    flex: 1;
    overflow: hidden;
    background-color: #004b7a;
    font-family: "Noto Sans", sans-serif;
}

.page-inner {
    min-width: 940px;
    padding-top: 56px;
}

.page h1 {
    font-size: 50px;
    line-height: 72px;
    text-align: center;
}

.plans {
    display: flex;
    gap: 17px;
    padding: 53px 0 0 47px;
}

.plan {
    flex: 0 0 262px;
    display: flex;
    flex-direction: column;
    align-items: center;
    padding-bottom: 20px;
    border-radius: 5px;
    overflow: hidden;
    background-color: #fff;
    box-shadow: 0 0 4px rgba(0, 0, 0, 0.3);
    text-align: center;
}

.plan h2 {
    align-self: stretch;
    font-size: 36px;
    line-height: 87px;
}

.price {
    align-self: stretch;
    height: 149px;
    padding-top: 16px;
}

.price strong,
.price span {
    display: block;
    font-weight: normal;
}

.price strong {
    font-size: 50px;
    line-height: 72px;
}

.price span {
    font-size: 19px;
    line-height: 56px;
}

.plan ul {
    padding: 20px 0 40px;
    color: #555;
    font-size: 18px;
    line-height: 48px;
}

.plan button {
    width: 120px;
    height: 48px;
    border-radius: 4px;
    font-size: 18px;
    font-weight: 500;
}

.basic h2,
.basic button {
    background-color: #d39e05;
}

.basic .price {
    background-color: #ebb414;
}

.standard h2,
.standard button {
    background-color: #7d1e48;
}

.standard .price {
    background-color: #95285a;
}

.premium h2,
.premium button {
    background-color: #15646b;
}

.premium .price {
    background-color: #2e828a;
}
```
